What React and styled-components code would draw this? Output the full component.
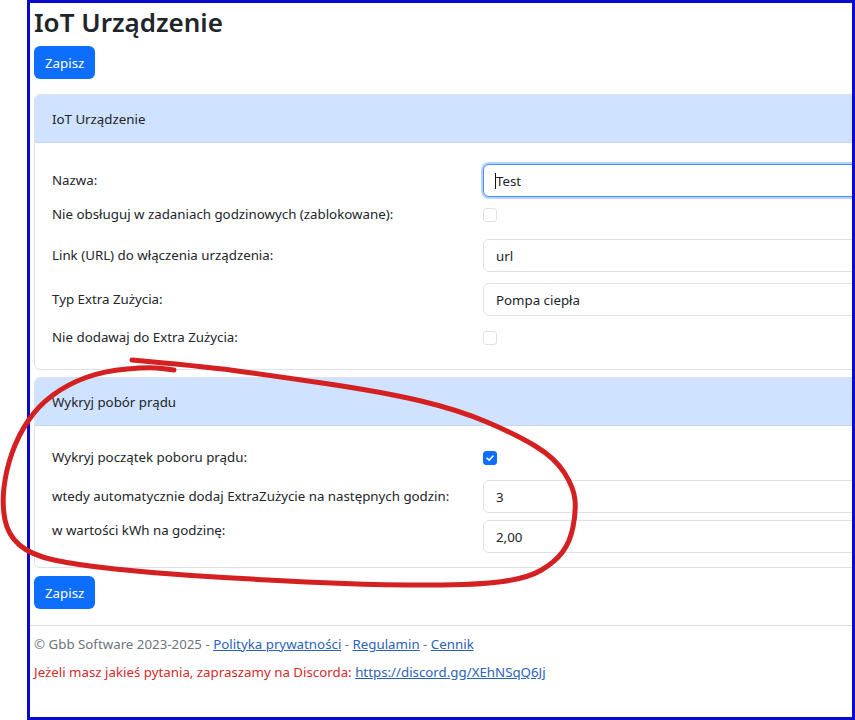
import styled, { createGlobalStyle } from "styled-components"

const GlobalStyle = createGlobalStyle`
  html, body {
    margin: 0;
    background: #fff;
    overflow: hidden;
  }
  * { box-sizing: border-box; }
`

const Root = styled.div`
  position: relative;
  width: 855px;
  height: 720px;
  font-family: "Noto Sans", "Open Sans", sans-serif;
  font-size: 13.3px;
  color: #212529;
`

const Shot = styled.div`
  margin-left: 27px;
  width: 828px;
  height: 720px;
  border: 3px solid #0a0acc;
  overflow: hidden;
`

const Main = styled.div`
  padding: 2px 0 0 4px;
`

const Title = styled.h1`
  margin: 0 0 6px;
  font-size: 26px;
  line-height: 35px;
  font-weight: 600;
`

const Button = styled.button`
  height: 33px;
  padding: 0 11px;
  border: none;
  border-radius: 6px;
  background: #0d6efd;
  color: #fff;
  font-family: inherit;
  font-size: 13.3px;
  margin-top: ${p => p.$mt || 0}px;
`

const Card = styled.div`
  width: 900px;
  margin-top: ${p => p.$mt || 0}px;
  border: 1px solid #dee2e6;
  border-radius: 6px;
  overflow: hidden;
`

const CardHeader = styled.div`
  height: 48px;
  display: flex;
  align-items: center;
  padding: 0 17px;
  background: #cfe2ff;
  border-bottom: 1px solid #c6d8f3;
`

const CardBody = styled.div`
  padding: ${p => p.$pt}px 17px ${p => p.$pb}px;
`

const Row = styled.div`
  display: grid;
  grid-template-columns: 431px 1fr;
  align-items: ${p => (p.$top ? "start" : "center")};
  margin-top: ${p => p.$mt || 0}px;
`

const Label = styled.div`
  line-height: 21px;
`

const InputWrap = styled.div`
  position: relative;
`

const Input = styled.div`
  height: 33px;
  display: flex;
  align-items: center;
  padding: 0 12px;
  border: 1px solid ${p => (p.$focus ? "#4a8ef0" : "#dee2e6")};
  border-radius: 6px;
  background: #fff;
  box-shadow: ${p => (p.$focus ? "0 0 0 2px rgba(13,110,253,0.3)" : "none")};
`

const Caret = styled.span`
  position: absolute;
  left: 12px;
  top: 9px;
  width: 1px;
  height: 16px;
  background: #111;
`

const Check = styled.span`
  display: flex;
  align-items: center;
  justify-content: center;
  width: 14px;
  height: 14px;
  border-radius: 3px;
  border: 1px solid ${p => (p.$on ? "#0d6efd" : "#dee2e6")};
  background: ${p => (p.$on ? "#0d6efd" : "#fff")};
`

const Hr = styled.div`
  height: 1px;
  background: #dcdcdc;
  margin-top: 16px;
`

const Footer = styled.div`
  padding: 8px 4px 0;
  line-height: 21px;
`

const Line = styled.div`
  color: ${p => p.$color};
  margin-bottom: ${p => p.$mb || 0}px;
`

const Link = styled.a`
  color: #2a63b8;
  text-decoration: underline;
`

const Marker = styled.svg`
  position: absolute;
  left: 0;
  top: 0;
  pointer-events: none;
`

// hand-drawn red loop round the second card
const loop = [
  [132, 360], [200, 366], [268, 375], [383, 392], [459, 410], [517, 435],
  [555, 458], [574, 488], [576, 512], [570, 542], [555, 562], [528, 578],
  [478, 585], [383, 585], [306, 582], [230, 578], [153, 573], [77, 565],
  [31, 555], [8, 535], [2, 505], [6, 470], [18, 436], [38, 406], [68, 384],
  [104, 371], [150, 367], [174, 370],
]

const smooth = pts => {
  let d = `M${pts[0][0]} ${pts[0][1]}`
  for (let i = 1; i < pts.length - 1; i++) {
    const mx = (pts[i][0] + pts[i + 1][0]) / 2
    const my = (pts[i][1] + pts[i + 1][1]) / 2
    d += ` Q${pts[i][0]} ${pts[i][1]} ${mx} ${my}`
  }
  const last = pts[pts.length - 1]
  return d + ` L${last[0]} ${last[1]}`
}

const Tick = () => (
  <svg width="10" height="10" viewBox="0 0 10 10">
    <path d="M2 5.2 L4.1 7.2 L8 3" fill="none" stroke="#fff" strokeWidth="1.6" strokeLinecap="round" strokeLinejoin="round" />
  </svg>
)

const App = () => {
  return (
    <Root>
      <GlobalStyle />
      <Shot>
        <Main>
          <Title>IoT Urządzenie</Title>
          <Button>Zapisz</Button>

          <Card $mt={15}>
            <CardHeader>IoT Urządzenie</CardHeader>
            <CardBody $pt={21} $pb={21}>
              <Row>
                <Label>Nazwa:</Label>
                <InputWrap>
                  <Input $focus>Test</Input>
                  <Caret />
                </InputWrap>
              </Row>
              <Row $mt={7}>
                <Label>Nie obsługuj w zadaniach godzinowych (zablokowane):</Label>
                <div><Check /></div>
              </Row>
              <Row $mt={14}>
                <Label>Link (URL) do włączenia urządzenia:</Label>
                <Input>url</Input>
              </Row>
              <Row $mt={11}>
                <Label>Typ Extra Zużycia:</Label>
                <Input>Pompa ciepła</Input>
              </Row>
              <Row $mt={11}>
                <Label>Nie dodawaj do Extra Zużycia:</Label>
                <div><Check /></div>
              </Row>
            </CardBody>
          </Card>

          <Card $mt={7}>
            <CardHeader>Wykryj pobór prądu</CardHeader>
            <CardBody $pt={21} $pb={14}>
              <Row>
                <Label>Wykryj początek poboru prądu:</Label>
                <div><Check $on><Tick /></Check></div>
              </Row>
              <Row $mt={12}>
                <Label>wtedy automatycznie dodaj ExtraZużycie na następnych godzin:</Label>
                <Input>3</Input>
              </Row>
              <Row $mt={7} $top>
                <Label>w wartości kWh na godzinę:</Label>
                <Input>2,00</Input>
              </Row>
            </CardBody>
          </Card>

          <Button $mt={8}>Zapisz</Button>
        </Main>
        <Hr />
        <Footer>
          <Line $color="#6c757d" $mb={7}>
            © Gbb Software 2023-2025 - <Link>Polityka prywatności</Link> - <Link>Regulamin</Link> - <Link>Cennik</Link>
          </Line>
          <Line $color="#d42a2a">
            Jeżeli masz jakieś pytania, zapraszamy na Discorda: <Link>https://discord.gg/XEhNSqQ6Jj</Link>
          </Line>
        </Footer>
      </Shot>
      <Marker width="855" height="720" viewBox="0 0 855 720">
        <path d={smooth(loop)} fill="none" stroke="#d42020" strokeWidth="5" strokeLinecap="round" strokeLinejoin="round" />
      </Marker>
    </Root>
  )
}

export default App
